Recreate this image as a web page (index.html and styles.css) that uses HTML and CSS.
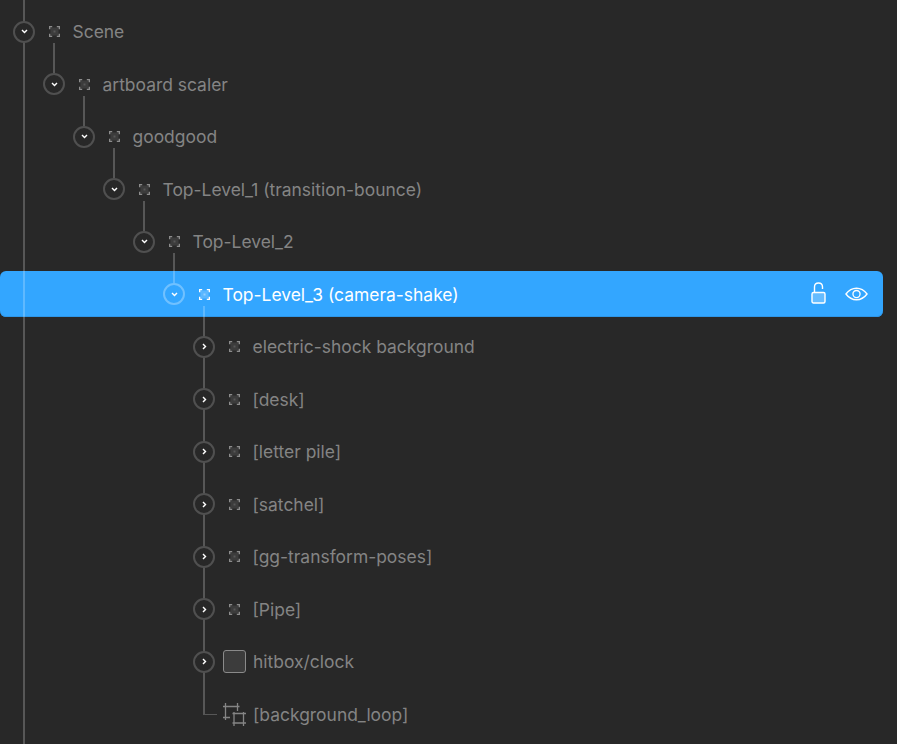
FILE: index.html
```html
<!DOCTYPE html>
<html lang="en">
<head>
<meta charset="utf-8">
<title>Hierarchy</title>
<link rel="stylesheet" href="styles.css">
</head>
<body>
<svg class="defs" width="0" height="0" aria-hidden="true">
  <defs>
    <symbol id="group" viewBox="0 0 11 11">
      <path d="M0.6 3.200V0.600H3.200M7.800 0.600H10.400V3.200M10.400 7.800V10.400H7.800M3.200 10.400H0.600V7.800" fill="none" stroke="currentColor" stroke-width="1.500"/>
      <rect x="1.500" y="1.500" width="8" height="8" fill="currentColor" opacity=".2"/>
      <rect x="4.500" y="4.500" width="2" height="2" fill="currentColor" opacity=".35"/>
    </symbol>
    <symbol id="down" viewBox="0 0 8 6"><path d="M1 1.200L4 4.200L7 1.200" fill="none" stroke="currentColor" stroke-width="1.700"/></symbol>
    <symbol id="right" viewBox="0 0 6 8"><path d="M1.200 1L4.200 4L1.200 7" fill="none" stroke="currentColor" stroke-width="1.700"/></symbol>
  </defs>
</svg>
<main class="tree">
  <div class="guide"></div>

  <div class="row d0 link"><div class="bar"><span class="toggle"><svg class="chev-d"><use href="#down"/></svg></span><svg class="icon"><use href="#group"/></svg><span class="label">Scene</span></div></div>
  <div class="row d1 link"><div class="bar"><span class="toggle"><svg class="chev-d"><use href="#down"/></svg></span><svg class="icon"><use href="#group"/></svg><span class="label">artboard scaler</span></div></div>
  <div class="row d2 link"><div class="bar"><span class="toggle"><svg class="chev-d"><use href="#down"/></svg></span><svg class="icon"><use href="#group"/></svg><span class="label">goodgood</span></div></div>
  <div class="row d3 link"><div class="bar"><span class="toggle"><svg class="chev-d"><use href="#down"/></svg></span><svg class="icon"><use href="#group"/></svg><span class="label">Top-Level_1 (transition-bounce)</span></div></div>
  <div class="row d4 link"><div class="bar"><span class="toggle"><svg class="chev-d"><use href="#down"/></svg></span><svg class="icon"><use href="#group"/></svg><span class="label">Top-Level_2</span></div></div>

  <div class="row d5 selected link-long">
    <div class="bar">
      <span class="toggle"><svg class="chev-d"><use href="#down"/></svg></span><svg class="icon"><use href="#group"/></svg><span class="label">Top-Level_3 (camera-shake)</span>
      <span class="actions">
        <svg class="lock" viewBox="0 0 15 22"><rect x="1" y="10.500" width="13" height="10.500" rx="1.500" fill="#fff" fill-opacity=".25" stroke="#fff" stroke-width="1.400"/><path d="M3.500 10.500V5C3.500 2.500 5 1 7.500 1C10 1 11.500 2.500 11.500 5V7" fill="none" stroke="#fff" stroke-width="1.400"/></svg>
        <svg class="eye" viewBox="0 0 24 14"><path d="M1 7C4 3 7.600 1 12 1C16.400 1 20 3 23 7C20 11 16.400 13 12 13C7.600 13 4 11 1 7Z" fill="none" stroke="#fff" stroke-width="1.400"/><circle cx="12" cy="7" r="3.700" fill="none" stroke="#fff" stroke-width="1.400"/></svg>
      </span>
    </div>
  </div>

  <div class="row d6"><div class="bar"><span class="toggle"><svg class="chev-r"><use href="#right"/></svg></span><svg class="icon"><use href="#group"/></svg><span class="label">electric-shock background</span></div></div>
  <div class="row d6"><div class="bar"><span class="toggle"><svg class="chev-r"><use href="#right"/></svg></span><svg class="icon"><use href="#group"/></svg><span class="label">[desk]</span></div></div>
  <div class="row d6"><div class="bar"><span class="toggle"><svg class="chev-r"><use href="#right"/></svg></span><svg class="icon"><use href="#group"/></svg><span class="label">[letter pile]</span></div></div>
  <div class="row d6"><div class="bar"><span class="toggle"><svg class="chev-r"><use href="#right"/></svg></span><svg class="icon"><use href="#group"/></svg><span class="label">[satchel]</span></div></div>
  <div class="row d6"><div class="bar"><span class="toggle"><svg class="chev-r"><use href="#right"/></svg></span><svg class="icon"><use href="#group"/></svg><span class="label">[gg-transform-poses]</span></div></div>
  <div class="row d6"><div class="bar"><span class="toggle"><svg class="chev-r"><use href="#right"/></svg></span><svg class="icon"><use href="#group"/></svg><span class="label">[Pipe]</span></div></div>
  <div class="row d6"><div class="bar"><span class="toggle"><svg class="chev-r"><use href="#right"/></svg></span><span class="swatch"></span><span class="label">hitbox/clock</span></div></div>
  <div class="row d6 last">
    <div class="bar">
      <span class="toggle-space"></span>
      <svg class="artboard" viewBox="0 0 23 23"><path d="M2.500 0V17M0 3.500H16.500M0 14.500H7M14.500 0V8" fill="none" stroke="currentColor" stroke-width="1.300"/><path d="M9.500 10.500H23M9.500 20H23M11 9V23M20.500 9V23" fill="none" stroke="currentColor" stroke-width="1.300"/></svg>
      <span class="label">[background_loop]</span>
    </div>
  </div>
</main>
</body>
</html>
```
FILE: styles.css
```css
* { box-sizing: border-box; }

html, body {
  margin: 0;
  height: 100%;
  overflow: hidden;
  background: #282828;
}

.defs { position: absolute; }

.tree {
  position: relative;
  height: 744px;
  padding-top: 5.25px;
  font-family: Inter, "Liberation Sans", sans-serif;
  font-size: 17.45px;
  color: #848484;
}

.guide {
  position: absolute;
  z-index: 1;
  left: 23px;
  top: 0;
  bottom: 0;
  width: 2px;
  background: rgba(255, 255, 255, .22);
}

.row {
  position: relative;
  height: 52.5px;
  padding: 3px 0;
}

.bar {
  display: flex;
  align-items: center;
  height: 46.5px;
  margin-right: 14px;
}

.d0 .bar { padding-left: 13px; }
.d1 .bar { padding-left: 43px; }
.d2 .bar { padding-left: 73px; }
.d3 .bar { padding-left: 103px; }
.d4 .bar { padding-left: 133px; }
.d5 .bar { padding-left: 163px; }
.d6 .bar { padding-left: 193px; }

.toggle,
.toggle-space {
  flex: none;
  width: 22px;
  height: 22px;
}

.toggle {
  position: relative;
  z-index: 2;
  display: flex;
  align-items: center;
  justify-content: center;
  border: 2px solid #505050;
  border-radius: 50%;
  background: #282828;
  color: #fff;
}

.chev-d { width: 7px; height: 5px; }
.chev-r { width: 5px; height: 7px; }

.icon {
  flex: none;
  width: 11px;
  height: 11px;
  margin: 0 13px 0 13.500px;
  color: #8c8c8c;
}

.swatch {
  flex: none;
  width: 23px;
  height: 23px;
  margin: 0 7px 0 8px;
  border: 1.500px solid #8a8a8a;
  border-radius: 3px;
  background: #3c3c3c;
}

.artboard {
  flex: none;
  width: 23px;
  height: 23px;
  margin: 0 7px 0 8px;
  color: #858585;
}

.label { white-space: nowrap; }

/* connectors from a node's icon down to its first child */
.link::after,
.link-long::after {
  content: "";
  position: absolute;
  z-index: 1;
  top: 38px;
  width: 2px;
  height: 30px;
  background: rgba(255, 255, 255, .22);
}
.d0.link::after { left: 53px; }
.d1.link::after { left: 83px; }
.d2.link::after { left: 113px; }
.d3.link::after { left: 143px; }
.d4.link::after { left: 173px; }
.d5.link-long::after { left: 203px; height: 409px; }

/* last child elbow */
.last::before {
  content: "";
  position: absolute;
  left: 205px;
  top: 26px;
  width: 12px;
  height: 1px;
  background: rgba(255, 255, 255, .22);
}

.selected .bar {
  position: relative;
  background: #33a6ff;
  border-radius: 6px;
  box-shadow: inset 0 -1px 0 #2d96e8;
  color: #fff;
}

.selected .toggle {
  background: transparent;
  border-color: rgba(255, 255, 255, .3);
}

.selected .icon { color: #fff; }

.actions {
  display: flex;
  align-items: center;
  gap: 19px;
  margin-left: auto;
  margin-right: 15px;
  transform: translateY(-1px);
}

.lock { width: 15px; height: 22px; }
.eye { width: 23px; height: 14px; transform: translateY(1px); }
```
